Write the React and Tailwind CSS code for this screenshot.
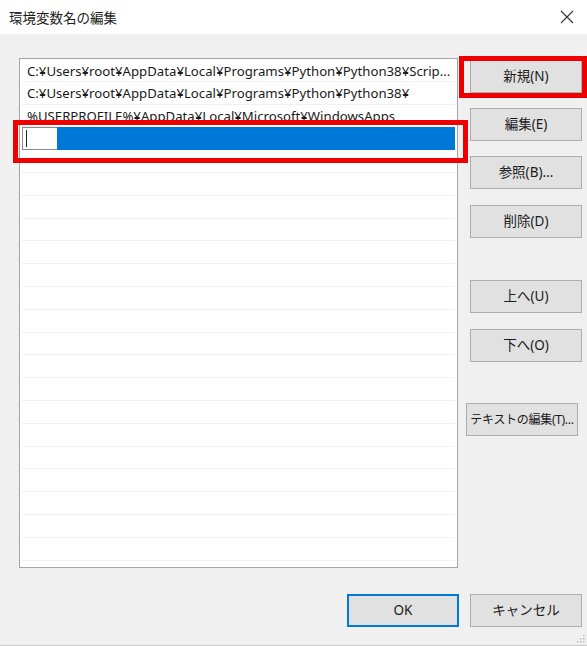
import React from 'react';

const rows = [
  'C:¥Users¥root¥AppData¥Local¥Programs¥Python¥Python38¥Scrip...',
  'C:¥Users¥root¥AppData¥Local¥Programs¥Python¥Python38¥',
  '%USERPROFILE%¥AppData¥Local¥Microsoft¥WindowsApps',
];

function Btn({ label, className = '' }) {
  return (
    <div
      className={`h-[33px] w-[112px] flex items-center justify-center whitespace-nowrap bg-[#e1e1e1] border border-[#adadad] text-[13.5px] text-[#1a1a1a] ${className}`}
    >
      {label}
    </div>
  );
}

export default function App() {
  const empty = Array.from({ length: 19 });
  return (
    <div
      className="relative w-[587px] h-[646px] bg-[#f0f0f0] overflow-hidden border-b border-[#c8c8c8]"
      style={{ fontFamily: '"Noto Sans", "Noto Sans CJK JP", sans-serif' }}
    >
      {/* title bar */}
      <div className="h-[34px] bg-white flex items-center justify-between pl-[9px] pr-[12px]">
        <span className="text-[13.5px] text-[#1a1a1a]" style={{ fontFamily: '"Noto Sans CJK JP", sans-serif' }}>
          環境変数名の編集
        </span>
        <svg width="14" height="14" viewBox="0 0 14 14" className="mr-[1px]">
          <path d="M1 1 L13 13 M13 1 L1 13" stroke="#333" strokeWidth="1.1" />
        </svg>
      </div>

      <div className="flex pt-[24px] pl-[19px]">
        {/* list */}
        <div className="w-[439px] h-[510px] bg-white border border-[#a5a5a5] overflow-hidden px-[2px]">
          {rows.map((r) => (
            <div
              key={r}
              className="h-[22.8px] flex items-center pt-[3px] pl-[5px] whitespace-nowrap overflow-hidden text-[13.2px] text-[#1a1a1a] border-b border-[#f0f0f0]"
            >
              {r}
            </div>
          ))}
          <div className="h-[22.8px] flex bg-[#0078d7]">
            <div className="w-[35px] h-full bg-white border border-r-0 border-[#8a8a8a] relative">
              <div className="absolute left-[3px] top-[2px] bottom-[2px] w-[1px] bg-[#222]" />
            </div>
          </div>
          {empty.map((_, i) => (
            <div key={i} className="h-[22.8px] border-b border-[#f0f0f0]" />
          ))}
        </div>

        {/* buttons */}
        <div className="flex flex-col pl-[12px] pt-[2px]">
          <Btn label="新規(N)" />
          <Btn label="編集(E)" className="mt-[15px]" />
          <Btn label="参照(B)..." className="mt-[15px]" />
          <Btn label="削除(D)" className="mt-[16px]" />
          <Btn label="上へ(U)" className="mt-[42px]" />
          <Btn label="下へ(O)" className="mt-[16px]" />
          <Btn label="テキストの編集(T)..." className="mt-[41px] -ml-[4px] !text-[12px] tracking-[-0.3px]" />
        </div>
      </div>

      {/* footer buttons */}
      <div className="flex pl-[347px] pt-[26px] gap-[11px]">
        <div className="h-[33px] w-[112px] flex items-center justify-center bg-[#e1e1e1] border-2 border-[#0078d7] text-[13.5px] text-[#1a1a1a]">
          OK
        </div>
        <Btn label="キャンセル" />
      </div>

      {/* resize grip */}
      <svg width="8" height="8" viewBox="0 0 8 8" className="absolute right-[2px] bottom-[2px]">
        <rect x="6" y="0" width="1.5" height="1.5" fill="#bbb" />
        <rect x="3" y="3" width="1.5" height="1.5" fill="#bbb" />
        <rect x="6" y="3" width="1.5" height="1.5" fill="#bbb" />
        <rect x="0" y="6" width="1.5" height="1.5" fill="#bbb" />
        <rect x="3" y="6" width="1.5" height="1.5" fill="#bbb" />
        <rect x="6" y="6" width="1.5" height="1.5" fill="#bbb" />
      </svg>

      {/* red highlight boxes */}
      <div className="absolute left-[13px] top-[120px] w-[455px] h-[43px] border-[5px] border-[#ee0000]" />
      <div className="absolute left-[459px] top-[56px] w-[128px] h-[42px] border-[5px] border-[#ee0000]" />
    </div>
  );
}
